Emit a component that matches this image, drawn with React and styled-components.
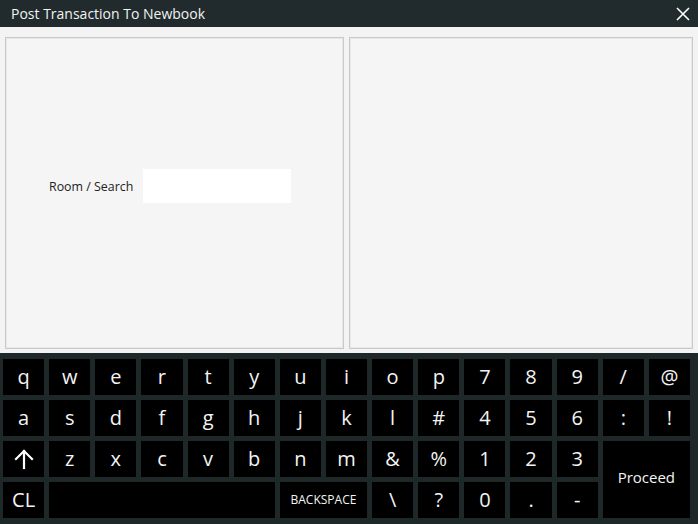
import styled, { createGlobalStyle } from 'styled-components'

const GlobalStyle = createGlobalStyle`
  html, body {
    margin: 0;
    padding: 0;
    background: #1e2829;
  }
  * {
    box-sizing: border-box;
  }
`;

const rows = [
  ['q', 'w', 'e', 'r', 't', 'y', 'u', 'i', 'o', 'p', '7', '8', '9', '/', '@'],
  ['a', 's', 'd', 'f', 'g', 'h', 'j', 'k', 'l', '#', '4', '5', '6', ':', '!'],
  ['SHIFT', 'z', 'x', 'c', 'v', 'b', 'n', 'm', '&', '%', '1', '2', '3'],
];

function ShiftIcon() {
  return (
    <svg width="22" height="22" viewBox="0 0 22 22" fill="none" stroke="#fff" strokeWidth="2.2" strokeLinecap="square">
      <path d="M11 20V3" />
      <path d="M3 11l8-8 8 8" />
    </svg>
  );
}

function App() {
  return (
    <Window>
      <GlobalStyle />
      <TitleBar>
        <span>Post Transaction To Newbook</span>
        <CloseButton>
          <svg width="14" height="14" viewBox="0 0 14 14" stroke="#fff" strokeWidth="1.6">
            <path d="M1 1l12 12M13 1L1 13" />
          </svg>
        </CloseButton>
      </TitleBar>
      <Content>
        <Panel>
          <SearchRow>
            <Label>Room / Search</Label>
            <SearchInput />
          </SearchRow>
        </Panel>
        <Panel />
      </Content>
      <Keyboard>
        {rows.map((row) =>
          row.map((k) => (
            <Key key={k}>{k === 'SHIFT' ? <ShiftIcon /> : k}</Key>
          ))
        )}
        <Key $span={2} $rowSpan={2} $small>Proceed</Key>
        <Key>CL</Key>
        <Key $span={5} />
        <Key $span={2} $tiny>BACKSPACE</Key>
        <Key>\</Key>
        <Key>?</Key>
        <Key>0</Key>
        <Key>.</Key>
        <Key>-</Key>
      </Keyboard>
    </Window>
  );
}

export default App;

const Window = styled.div`
  width: 698px;
  height: 524px;
  display: flex;
  flex-direction: column;
  font-family: "Open Sans", "Noto Sans", sans-serif;
  overflow: hidden;
`;

const TitleBar = styled.div`
  height: 27px;
  flex-shrink: 0;
  background: #212b2d;
  color: #f2f2f2;
  display: flex;
  align-items: center;
  justify-content: space-between;
  padding: 0 8px 0 11px;
  font-size: 14px;
`;

const CloseButton = styled.div`
  width: 14px;
  height: 14px;
  display: flex;
`;

const Content = styled.div`
  flex: 1;
  background: #f3f3f3;
  padding: 10px 5px 4px 5px;
  display: grid;
  grid-template-columns: 339px 344px;
  column-gap: 5px;
`;

const Panel = styled.div`
  background: #f5f5f5;
  border: 1px solid #c9c9c9;
  box-shadow: inset 0 0 0 1px #e8e8e8;
`;

const SearchRow = styled.div`
  display: flex;
  align-items: center;
  padding: 131px 0 0 43px;
  gap: 10px;
`;

const Label = styled.span`
  font-size: 12.4px;
  color: #222;
`;

const SearchInput = styled.div`
  width: 148px;
  height: 34px;
  background: #fff;
`;

const Keyboard = styled.div`
  height: 171px;
  flex-shrink: 0;
  background: #1e2829;
  padding: 6px 8px 6px 3px;
  display: grid;
  grid-template-columns: repeat(15, 1fr);
  grid-template-rows: repeat(4, 36px);
  gap: 5px;
`;

const Key = styled.div`
  background: #000;
  color: #f4f4f4;
  display: flex;
  align-items: center;
  justify-content: center;
  font-size: ${(p) => (p.$tiny ? '12px' : p.$small ? '15px' : '20px')};
  padding-bottom: ${(p) => (p.$small ? '4px' : '0')};
  grid-column: ${(p) => `span ${p.$span || 1}`};
  grid-row: ${(p) => `span ${p.$rowSpan || 1}`};
  line-height: 1;
`;
